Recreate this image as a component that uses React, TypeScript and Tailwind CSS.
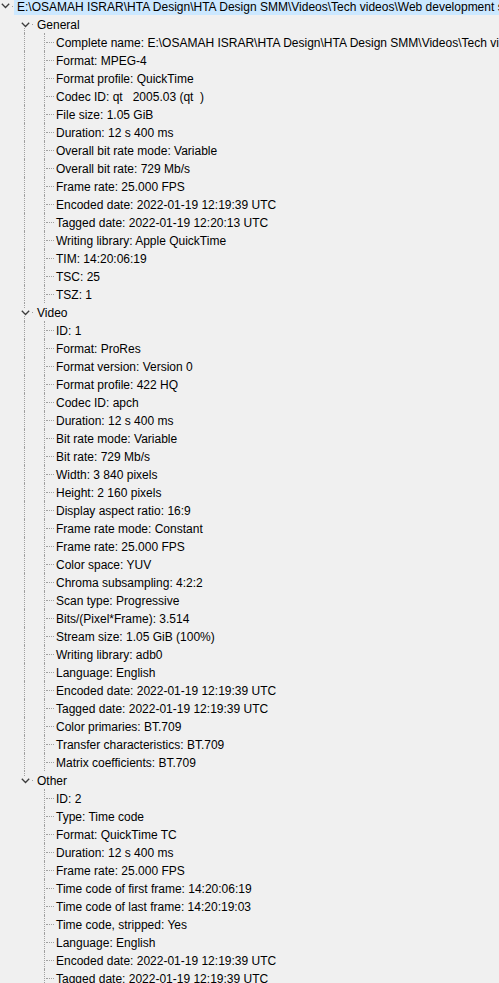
import React from 'react';

const path = 'E:\\OSAMAH ISRAR\\HTA Design\\HTA Design SMM\\Videos\\Tech videos\\Web development series\\Episode 01.mov';

const sections: { title: string; items: string[] }[] = [
  {
    title: 'General',
    items: [
      'Complete name: ' + path,
      'Format: MPEG-4',
      'Format profile: QuickTime',
      'Codec ID: qt   2005.03 (qt  )',
      'File size: 1.05 GiB',
      'Duration: 12 s 400 ms',
      'Overall bit rate mode: Variable',
      'Overall bit rate: 729 Mb/s',
      'Frame rate: 25.000 FPS',
      'Encoded date: 2022-01-19 12:19:39 UTC',
      'Tagged date: 2022-01-19 12:20:13 UTC',
      'Writing library: Apple QuickTime',
      'TIM: 14:20:06:19',
      'TSC: 25',
      'TSZ: 1',
    ],
  },
  {
    title: 'Video',
    items: [
      'ID: 1',
      'Format: ProRes',
      'Format version: Version 0',
      'Format profile: 422 HQ',
      'Codec ID: apch',
      'Duration: 12 s 400 ms',
      'Bit rate mode: Variable',
      'Bit rate: 729 Mb/s',
      'Width: 3 840 pixels',
      'Height: 2 160 pixels',
      'Display aspect ratio: 16:9',
      'Frame rate mode: Constant',
      'Frame rate: 25.000 FPS',
      'Color space: YUV',
      'Chroma subsampling: 4:2:2',
      'Scan type: Progressive',
      'Bits/(Pixel*Frame): 3.514',
      'Stream size: 1.05 GiB (100%)',
      'Writing library: adb0',
      'Language: English',
      'Encoded date: 2022-01-19 12:19:39 UTC',
      'Tagged date: 2022-01-19 12:19:39 UTC',
      'Color primaries: BT.709',
      'Transfer characteristics: BT.709',
      'Matrix coefficients: BT.709',
    ],
  },
  {
    title: 'Other',
    items: [
      'ID: 2',
      'Type: Time code',
      'Format: QuickTime TC',
      'Duration: 12 s 400 ms',
      'Frame rate: 25.000 FPS',
      'Time code of first frame: 14:20:06:19',
      'Time code of last frame: 14:20:19:03',
      'Time code, stripped: Yes',
      'Language: English',
      'Encoded date: 2022-01-19 12:19:39 UTC',
      'Tagged date: 2022-01-19 12:19:39 UTC',
      'Bit depth: 8 bits',
    ],
  },
];

const Chevron = () => (
  <svg width="9" height="6" viewBox="0 0 9 6" className="block">
    <polyline points="0.8,0.8 4.5,4.5 8.2,0.8" fill="none" stroke="#3c3c3c" strokeWidth="1.3" />
  </svg>
);

const Leaf = ({ text, showParentLine }: { text: string; showParentLine: boolean }) => (
  <div className="h-[18px] flex items-center">
    <div className="w-[15px] shrink-0" />
    <div className="w-5 h-full shrink-0 flex">
      <div className={`w-[10px] h-full ${showParentLine ? 'border-r border-dotted border-[#a0a0a0]' : ''}`} />
    </div>
    <div className="w-5 h-full shrink-0 flex relative">
      <div className="w-[10px] h-full border-r border-dotted border-[#a0a0a0]" />
      <div className="absolute left-[11px] top-[9px] w-[8px] border-t border-dotted border-[#a0a0a0]" />
    </div>
    <span className="pl-[1px] mt-[2px] whitespace-pre">{text}</span>
  </div>
);

export default function App() {
  return (
    <div
      className="w-[499px] h-[983px] overflow-hidden bg-[#f0f0f0] text-black text-[12px] leading-[18px]"
      style={{ fontFamily: '"Liberation Sans", Arial, sans-serif' }}
    >
      <div className="-mt-[3px]">
        <div className="h-[18px] flex items-center">
          <div className="w-[11px] shrink-0 flex justify-end pr-[1px]">
            <Chevron />
          </div>
          <div className="w-[3px] shrink-0 flex items-center">
            <div className="w-[1px] h-[1px] ml-[1px] bg-[#a0a0a0]" />
          </div>
          <div className="h-full flex-1 bg-[#cce8ff] pl-[3px] pt-[1px] whitespace-nowrap">{path}</div>
        </div>

        {sections.map((s, si) => {
          const lastSection = si === sections.length - 1;
          return (
            <div key={s.title}>
              <div className="h-[18px] flex items-center">
                <div className="w-[15px] shrink-0" />
                <div className="w-5 h-full shrink-0 flex flex-col relative">
                  <div className="flex-1 flex">
                    <div className={`w-[10px] ${si > 0 ? 'border-r border-dotted border-[#a0a0a0]' : ''}`} />
                  </div>
                  <div className="flex-1 flex">
                    <div className={`w-[10px] ${!lastSection ? 'border-r border-dotted border-[#a0a0a0]' : ''}`} />
                  </div>
                  <div className="absolute left-[5px] top-[6px] bg-[#f0f0f0] w-[11px] h-[7px] flex items-center justify-center">
                    <Chevron />
                  </div>
                  <div className="absolute left-[17px] top-[9px] w-[1px] h-[1px] bg-[#a0a0a0]" />
                </div>
                <span className="pl-[2px] mt-[2px]">{s.title}</span>
              </div>
              {s.items.map((it, i) => (
                <Leaf key={i} text={it} showParentLine={!lastSection} />
              ))}
            </div>
          );
        })}
      </div>
    </div>
  );
}
